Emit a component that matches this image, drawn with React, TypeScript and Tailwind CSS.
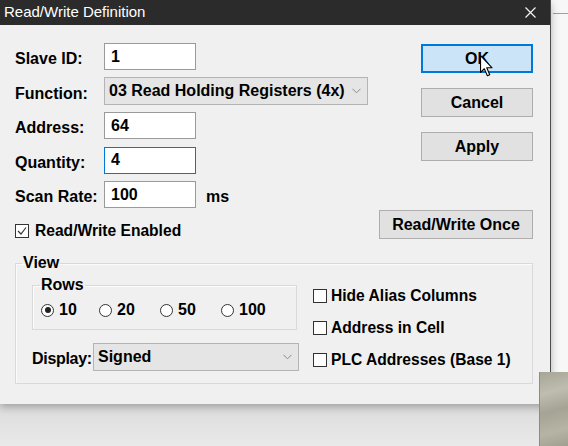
const Chevron = () => (
  <svg width="9" height="6" viewBox="0 0 9 6" className="shrink-0">
    <path d="M0.5 0.8 L4.5 4.8 L8.5 0.8" fill="none" stroke="#8a8a8a" strokeWidth="1" />
  </svg>
);

const TextBox = ({ value, focused }: { value: string; focused?: boolean }) => (
  <div
    className={`w-[92px] h-[27px] bg-white border flex items-center pl-[6px] text-[16px] font-bold ${
      focused ? "border-[#0078d7]" : "border-[#9a9a9a]"
    }`}
  >
    {value}
  </div>
);

const Combo = ({ value, w }: { value: string; w: string }) => (
  <div className={`${w} h-[28px] bg-[#e5e5e5] border border-[#b4b4b4] flex items-center justify-between pl-[4px] pr-[6px] text-[16px] font-bold`}>
    <span className="whitespace-nowrap">{value}</span>
    <Chevron />
  </div>
);

const Field = ({ label, children }: { label: string; children: React.ReactNode }) => (
  <div className="flex items-center h-[27px]">
    <span className="w-[89px] pt-[5px] text-[16px] font-bold whitespace-nowrap">{label}</span>
    {children}
  </div>
);

const Check = ({ checked, label, gap }: { checked?: boolean; label: string; gap: string }) => (
  <div className={`flex items-center h-[20px] ${gap}`}>
    <span className="w-[14px] h-[14px] bg-white border border-[#333] flex items-center justify-center">
      {checked && (
        <svg width="10" height="10" viewBox="0 0 10 10">
          <path d="M1 5 L4 8 L9 1.5" fill="none" stroke="#333" strokeWidth="1.2" />
        </svg>
      )}
    </span>
    <span className="text-[15.6px] font-bold whitespace-nowrap">{label}</span>
  </div>
);

const Radio = ({ checked, label, w }: { checked?: boolean; label: string; w: string }) => (
  <div className={`${w} flex items-center gap-[5px] h-[18px]`}>
    <span className="w-[13px] h-[13px] rounded-full bg-white border border-[#333] flex items-center justify-center">
      {checked && <span className="w-[6px] h-[6px] rounded-full bg-[#222]" />}
    </span>
    <span className="text-[16px] font-bold">{label}</span>
  </div>
);

const Btn = ({ label, w, primary }: { label: string; w: string; primary?: boolean }) => (
  <div
    className={`${w} h-[29px] flex items-center justify-center text-[16px] font-bold ${
      primary ? "bg-[#cce4f7] border-2 border-[#0078d7]" : "bg-[#e1e1e1] border border-[#adadad]"
    }`}
  >
    {label}
  </div>
);

export default function App() {
  return (
    <div className="relative w-[568px] h-[446px] overflow-hidden bg-[#e6e6e6] font-['Liberation_Sans',Arial,sans-serif] text-black">
      <div className="flex h-[404px]">
        <div className="relative z-10 w-[551px] h-full flex flex-col bg-[#f0f0f0] border-r border-[#4d4d4d] shadow-[0_3px_8px_rgba(0,0,0,0.28)]">
          {/* title bar */}
          <div className="h-[25px] bg-[#2b2b2b] flex items-center justify-between pl-[4px] pr-[14px]">
            <span className="text-[15px] text-white">Read/Write Definition</span>
            <svg width="11" height="11" viewBox="0 0 11 11">
              <path d="M0.5 0.5 L10.5 10.5 M10.5 0.5 L0.5 10.5" stroke="#f2f2f2" strokeWidth="1.2" />
            </svg>
          </div>

          <div className="flex-1 pl-[15px] pr-[17px] pt-[18px]">
            <div className="flex items-start">
              <div className="flex flex-col">
                <div className="flex flex-col gap-[7.5px]">
                  <Field label="Slave ID:">
                    <TextBox value="1" />
                  </Field>
                  <Field label="Function:">
                    <Combo value="03 Read Holding Registers (4x)" w="w-[264px]" />
                  </Field>
                  <Field label="Address:">
                    <TextBox value="64" />
                  </Field>
                  <Field label="Quantity:">
                    <TextBox value="4" focused />
                  </Field>
                  <Field label="Scan Rate:">
                    <TextBox value="100" />
                    <span className="ml-[10px] pt-[5px] text-[16px] font-bold">ms</span>
                  </Field>
                </div>
                <div className="mt-[13px]">
                  <Check checked label="Read/Write Enabled" gap="gap-[6px]" />
                </div>
              </div>

              <div className="ml-auto pt-[1px] flex flex-col items-end gap-[15px]">
                <Btn label="OK" w="w-[112px]" primary />
                <Btn label="Cancel" w="w-[112px]" />
                <Btn label="Apply" w="w-[112px]" />
                <div className="mt-[34px]">
                  <Btn label="Read/Write Once" w="w-[154px]" />
                </div>
              </div>
            </div>

            {/* View group */}
            <fieldset className="mt-[13px] border border-[#d9d9d9] shadow-[inset_1px_1px_0_#fbfbfb] pl-[16px] pb-[12px]">
              <legend className="ml-[-10px] px-px text-[16px] leading-[18px] font-bold">View</legend>
              <div className="flex">
                <div className="flex flex-col">
                  <fieldset className="mt-[4px] w-[265px] border border-[#d9d9d9] shadow-[inset_1px_1px_0_#fbfbfb] pl-[8px] pt-[7px] pb-[10px]">
                    <legend className="ml-[-1px] px-px text-[16px] leading-[18px] font-bold">Rows</legend>
                    <div className="flex">
                      <Radio checked label="10" w="w-[58px]" />
                      <Radio label="20" w="w-[61px]" />
                      <Radio label="50" w="w-[61px]" />
                      <Radio label="100" w="w-[60px]" />
                    </div>
                  </fieldset>
                  <div className="mt-[13px] flex items-center">
                    <span className="w-[61px] pt-[3px] text-[16px] font-bold whitespace-nowrap tracking-[-0.3px]">Display:</span>
                    <Combo value="Signed" w="w-[206px]" />
                  </div>
                </div>
                <div className="ml-[14px] pt-[14px] flex flex-col gap-[12px]">
                  <Check label="Hide Alias Columns" gap="gap-[4px]" />
                  <Check label="Address in Cell" gap="gap-[4px]" />
                  <Check label="PLC Addresses (Base 1)" gap="gap-[4px]" />
                </div>
              </div>
            </fieldset>
          </div>
        </div>
        <div className="flex-1 bg-[#f7f7f7] pt-[13px]">
          <div className="ml-[2px] h-px bg-[#a0a0a0]" />
        </div>
      </div>
      <div className="h-[42px] bg-gradient-to-b from-[#dcdcdc] to-[#e9e9e9]" />

      {/* background picture peeking from behind */}
      <div className="absolute z-20 left-[539px] top-[372px] w-[29px] h-[74px] border-l border-[#8d8c7f] bg-[linear-gradient(165deg,#a6a596_0%,#bebdaf_28%,#a4a394_52%,#b5b4a5_78%,#a09f90_100%)]" />

      {/* mouse pointer */}
      <svg className="absolute z-30 left-[480px] top-[55px]" width="13" height="22" viewBox="0 0 12 20">
        <path d="M0.5 0.5 L0.5 16 L4 12.5 L6.8 19 L9 18 L6.2 11.6 L11 11.6 Z" fill="#fff" stroke="#000" strokeWidth="1" strokeLinejoin="round" />
      </svg>
    </div>
  );
}
